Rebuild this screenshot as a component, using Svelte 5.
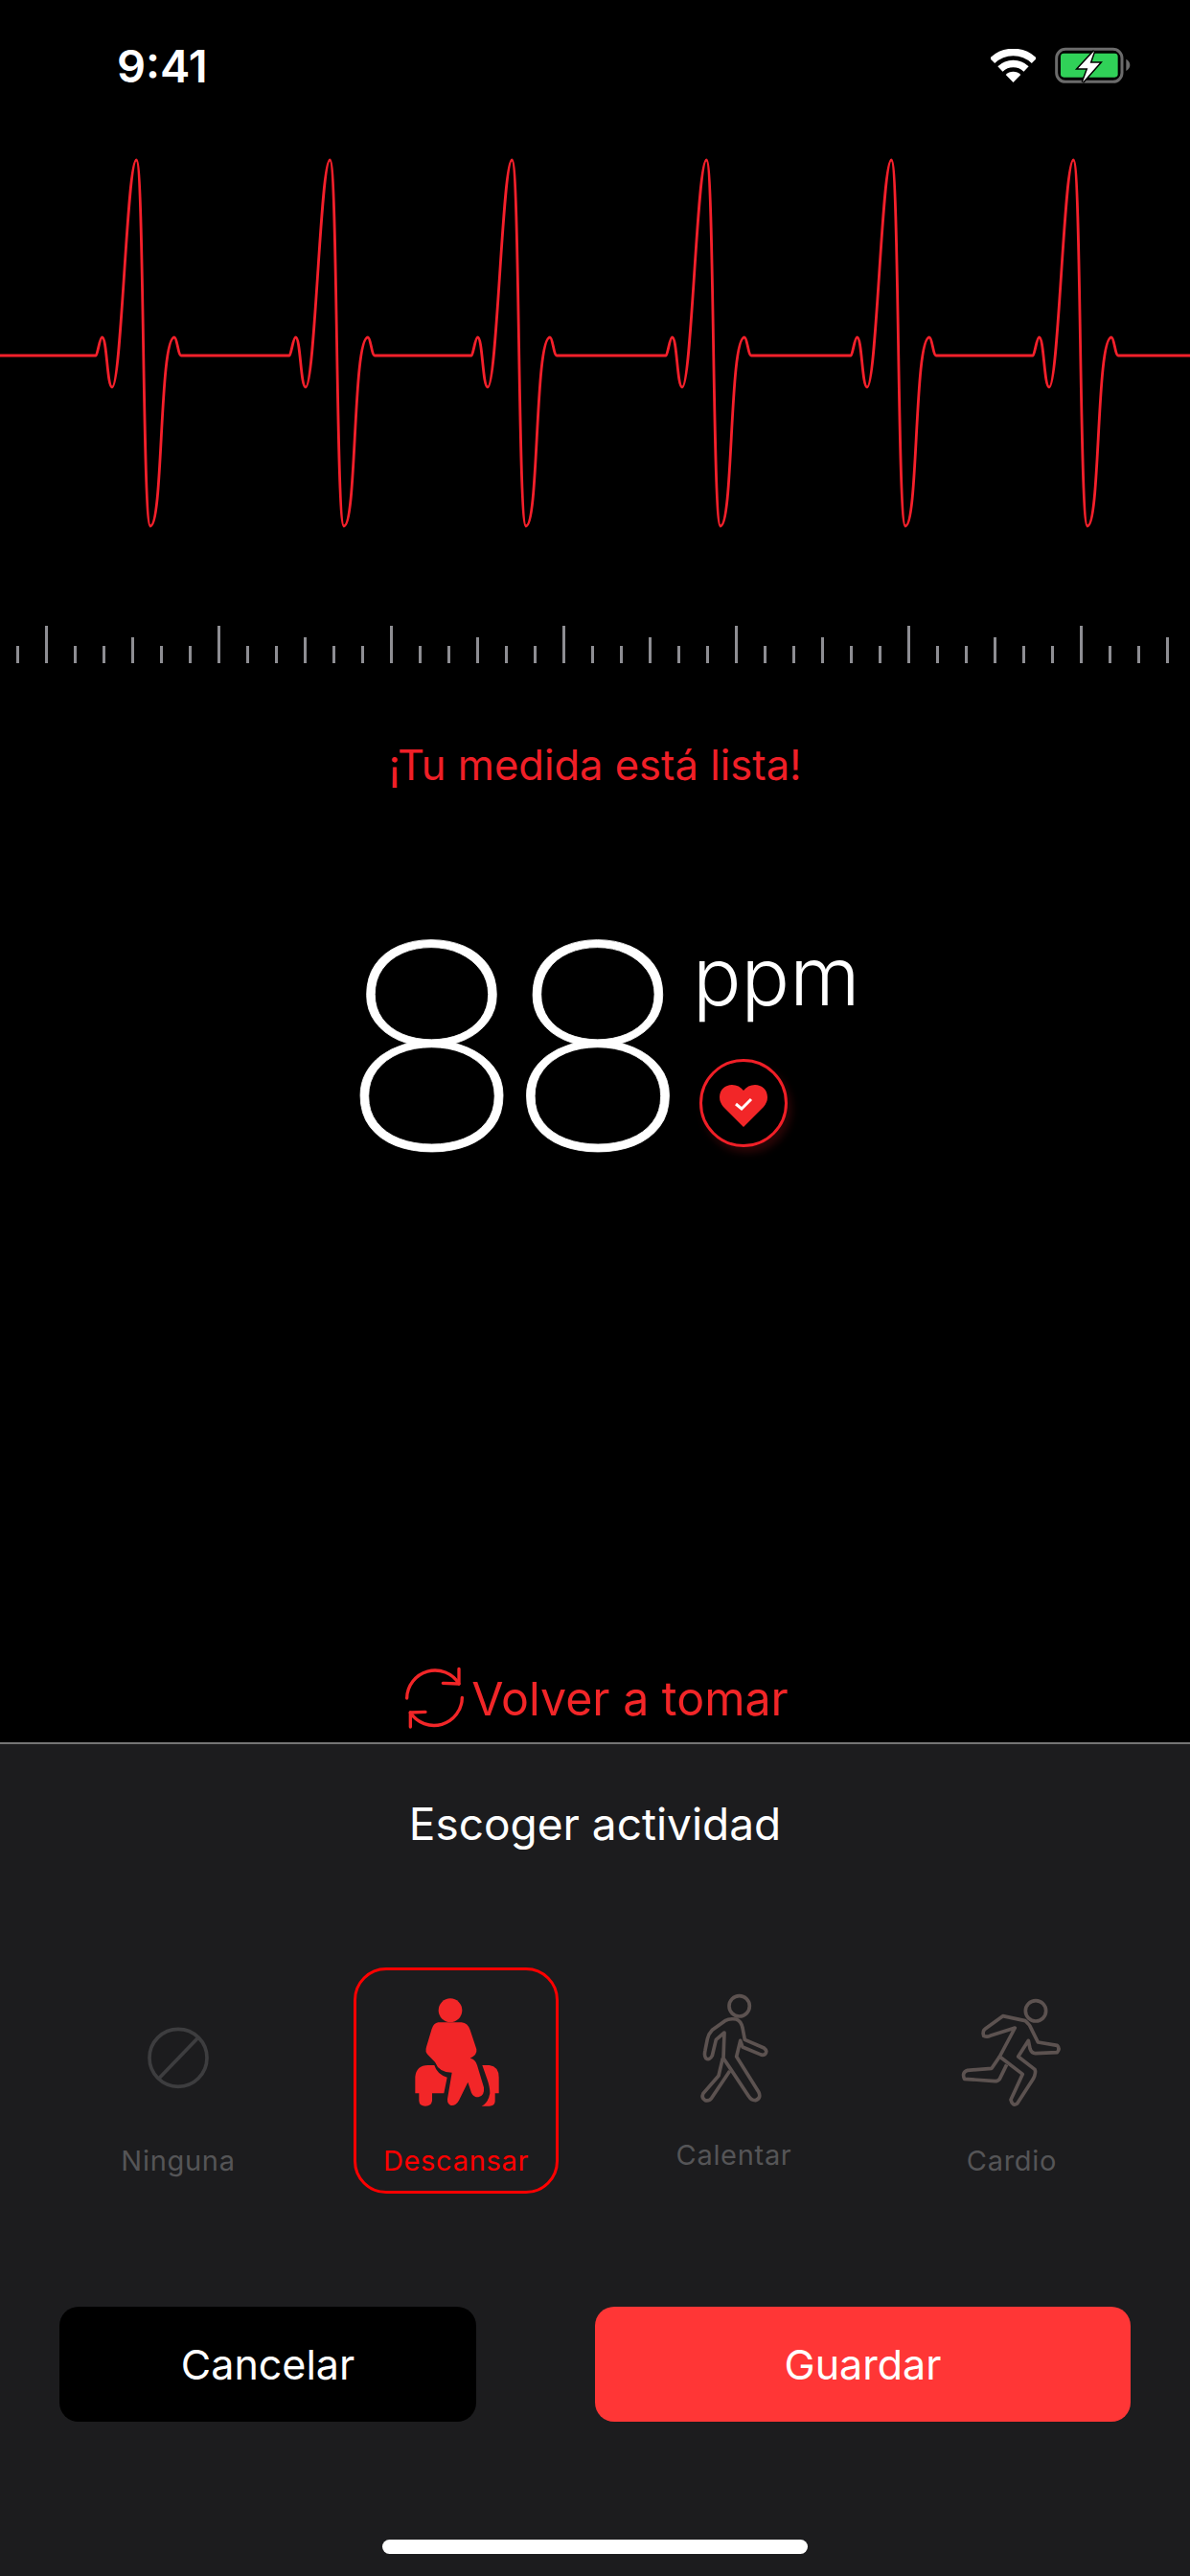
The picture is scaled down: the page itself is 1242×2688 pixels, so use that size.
<script lang="ts">
  const BASELINE = 371;

  // x where each beat leaves the flat line
  const beatStarts = [100, 302, 492, 695, 888, 1078];

  function beatPath(x0: number): string {
    const p = (x: number, y: number) => `${x0 + x},${BASELINE + y}`;
    return [
      `L${p(0, 0)}`,
      `C${p(2, -1)} ${p(4, -19)} ${p(6.5, -19)}`,
      `C${p(11.7, -19)} ${p(11.7, 33)} ${p(17, 33)}`,
      `C${p(26.8, 33)} ${p(32.5, -204)} ${p(42.3, -204)}`,
      `C${p(50.5, -204)} ${p(48.5, 178)} ${p(57, 178)}`,
      `C${p(70.4, 178)} ${p(66.2, -19)} ${p(82, -19)}`,
      `C${p(84.8, -19)} ${p(86, 0)} ${p(89, 0)}`
    ].join(' ');
  }

  const ecgPath = `M0,${BASELINE} ${beatStarts.map(beatPath).join(' ')} L1242,${BASELINE}`;

  const ticks = Array.from({ length: 41 }, (_, i) => {
    const step = (i + 5) % 6;
    return step === 0 ? 'major' : step === 3 ? 'medium' : 'minor';
  });
</script>

<div class="screen">
  <header class="status">
    <span class="time">9:41</span>
    <div class="status-icons">
      <svg class="wifi" viewBox="0 0 47 35" width="47" height="35">
        <path d="M1.6 12.3A31.5 31.5 0 0 1 45.4 12.3" fill="none" stroke="#fff" stroke-width="7.5" />
        <path d="M9.95 21A19.5 19.5 0 0 1 37.05 21" fill="none" stroke="#fff" stroke-width="7.5" />
        <path d="M23.5 35L15.7 27A11 11 0 0 1 31.3 27Z" fill="#fff" />
      </svg>
      <svg class="battery" viewBox="262 55 240 114" width="80" height="38">
        <rect x="270" y="62" width="205" height="102" rx="28" fill="none" stroke="#6b6b6b" stroke-width="9" />
        <rect x="283" y="75" width="179" height="75" rx="10" fill="#30d158" />
        <path d="M488 93Q500 100 500 112Q500 123 488 130Z" fill="#6b6b6b" />
        <path d="M388 68L338 122H368L352 165L405 105H375Z" fill="#fff" stroke="#000" stroke-width="9" paint-order="stroke" />
      </svg>
    </div>
  </header>

  <svg class="ecg" viewBox="0 136 1242 444" width="1242" height="444">
    <path d={ecgPath} fill="none" stroke="#f5202b" stroke-width="2.8" stroke-linejoin="round" />
  </svg>

  <div class="ruler">
    {#each ticks as tick}
      <span class="tick {tick}"></span>
    {/each}
  </div>

  <p class="ready">¡Tu medida está lista!</p>

  <div class="reading">
    <span class="value">88</span>
    <div class="reading-side">
      <span class="unit">ppm</span>
      <div class="badge">
        <svg viewBox="0 0 50 44" width="50" height="44">
          <path d="M25 44L4 23Q0 18 0 13C0 5 6 0 13 0C18 0 22 2 25 6C28 2 32 0 37 0C44 0 50 5 50 13Q50 18 46 23Z" fill="#f22628" />
          <path d="M17 20L23 25L33 15" fill="none" stroke="#fff" stroke-width="3" />
        </svg>
      </div>
    </div>
  </div>

  <div class="retake">
    <svg viewBox="60 55 210 210" width="70" height="70">
      <g fill="none" stroke="#f22628" stroke-width="10" stroke-linecap="round" stroke-linejoin="round">
        <path d="M77 160A88 88 0 0 1 240 115" />
        <path d="M240 68V115L190 113" />
        <path d="M250 158A88 88 0 0 1 88 205" />
        <path d="M88 250V205L135 203" />
      </g>
    </svg>
    <span>Volver a tomar</span>
  </div>

  <section class="sheet">
    <h2 class="sheet-title">Escoger actividad</h2>

    <div class="activities">
      <div class="activity">
        <svg class="icon" viewBox="79 138 360 390" width="120" height="130">
          <circle cx="259" cy="349" r="90" fill="none" stroke="#3d3d3f" stroke-width="11" />
          <path d="M320 287L200 412" fill="none" stroke="#3d3d3f" stroke-width="11" />
        </svg>
        <span class="label">Ninguna</span>
      </div>

      <div class="activity selected">
        <svg class="icon" viewBox="948 138 360 390" width="120" height="130">
          <g fill="#f22628">
            <circle cx="1110" cy="200" r="37" />
            <path d="M1072 238H1145Q1165 240 1172 262L1192 322Q1195 340 1172 350Q1188 352 1194 372L1215 442Q1218 468 1198 472Q1182 472 1176 458L1165 425L1137 482Q1127 500 1112 498Q1100 494 1101 478L1115 395Q1075 395 1062 362L1040 340Q1030 330 1035 315L1052 258Q1058 240 1072 238Z" />
            <path d="M1000 460V408Q1004 372 1040 372H1060Q1068 400 1100 410L1090 460H1053V484Q1050 500 1032 500Q1013 500 1012 484V460Z" />
            <path d="M1210 372H1232Q1262 376 1262 410V460H1250V486Q1248 500 1232 500H1208Q1230 488 1234 460Q1234 440 1225 415Z" />
          </g>
        </svg>
        <span class="label">Descansar</span>
      </div>

      <div class="activity calentar">
        <svg class="icon" viewBox="138 108 360 390" width="120" height="130">
          <g fill="none" stroke="#5c5250" stroke-width="11" stroke-linejoin="round">
            <circle cx="335" cy="157" r="32" />
            <path d="M290 203Q305 195 325 198Q340 203 345 225L352 262L412 288Q425 298 415 308Q408 312 400 308L345 285L338 265L326 315L395 425Q405 445 385 452Q372 452 365 440L285 320L288 240L262 262L250 312Q242 328 230 320Q224 312 228 295L235 260Q238 245 250 232Z" />
            <path d="M283 320L270 375L222 430Q215 445 228 452Q240 455 248 445L305 360" />
          </g>
        </svg>
        <span class="label">Calentar</span>
      </div>

      <div class="activity">
        <svg class="icon" viewBox="1008 108 360 390" width="120" height="130">
          <g fill="none" stroke="#5c5250" stroke-width="11" stroke-linejoin="round">
            <circle cx="1263" cy="172" r="32" />
            <path d="M1160 188L1230 203Q1245 215 1250 230L1270 270L1330 280Q1340 290 1330 302L1262 305Q1250 305 1245 290L1240 265L1208 315L1260 355Q1265 365 1255 385L1205 462Q1190 472 1185 450L1222 370L1150 315L1198 225L1120 250Q1110 255 1100 250Q1095 235 1105 228Z" />
            <path d="M1150 315L1125 352L1050 358Q1030 365 1040 385L1135 392Q1145 392 1150 385L1172 340" />
          </g>
        </svg>
        <span class="label">Cardio</span>
      </div>
    </div>

    <div class="actions">
      <button class="btn cancel">Cancelar</button>
      <button class="btn save">Guardar</button>
    </div>

    <div class="home-indicator"></div>
  </section>
</div>

<style>
  :global(body) {
    background: #000;
  }

  .screen {
    width: 1242px;
    height: 2688px;
    display: flex;
    flex-direction: column;
    background: #000;
    color: #fff;
    font-family: Inter, "Liberation Sans", sans-serif;
    overflow: hidden;
  }

  .status {
    height: 136px;
    flex: none;
    display: flex;
    align-items: center;
    justify-content: space-between;
    box-sizing: border-box;
    padding: 0 62px 0 122px;
  }

  .time {
    font-size: 47px;
    font-weight: 600;
    line-height: 1;
  }

  .status-icons {
    display: flex;
    align-items: center;
    gap: 19px;
  }

  .ecg {
    display: block;
    flex: none;
  }

  .ruler {
    height: 39px;
    margin-top: 73px;
    padding-left: 16.5px;
    display: flex;
    align-items: flex-end;
    gap: 27px;
    flex: none;
  }

  .tick {
    width: 3px;
    background: #8e8e93;
  }

  .tick.major { height: 39px; }
  .tick.medium { height: 27px; }
  .tick.minor { height: 18px; }

  .ready {
    margin: 81px 0 0;
    text-align: center;
    font-size: 43.5px;
    line-height: 50px;
    color: #f01f27;
  }

  .reading {
    margin-top: 106px;
    padding-left: 360px;
    display: flex;
    align-items: flex-start;
  }

  .value {
    font-family: Roboto, sans-serif;
    font-weight: 100;
    font-size: 303px;
    line-height: 320px;
    letter-spacing: -6px;
    -webkit-text-stroke: 0.8px #fff;
    width: 363px;
    flex: none;
    margin-top: 7px;
    transform: scaleX(1.085);
    transform-origin: left center;
  }

  .reading-side {
    display: flex;
    flex-direction: column;
    align-items: flex-start;
    padding-top: 40px;
  }

  .unit {
    font-weight: 300;
    font-size: 84px;
    line-height: 100px;
  }

  .badge {
    width: 92px;
    height: 92px;
    box-sizing: border-box;
    margin: 36px 0 0 7px;
    border: 3px solid #f01f27;
    border-radius: 50%;
    box-shadow: 4px 6px 8px rgba(240, 31, 39, 0.18);
    display: flex;
    align-items: center;
    justify-content: center;
  }

  .badge svg {
    margin-top: 6px;
  }

  .retake {
    margin-top: auto;
    margin-bottom: 11px;
    display: flex;
    align-items: center;
    justify-content: center;
    gap: 3px;
    font-size: 48.3px;
    color: #f22628;
    height: 70px;
  }

  .sheet {
    height: 870px;
    flex: none;
    box-sizing: border-box;
    border-top: 2px solid #757575;
    background: #1c1c1e;
    display: flex;
    flex-direction: column;
  }

  .sheet-title {
    margin: 58px 0 0;
    text-align: center;
    font-size: 46px;
    font-weight: 400;
    line-height: 50px;
  }

  .activities {
    margin-top: 125px;
    padding-left: 41px;
    display: grid;
    grid-template-columns: repeat(4, 290px);
  }

  .activity {
    height: 236px;
    box-sizing: border-box;
    padding-top: 21px;
    border: 3px solid transparent;
    border-radius: 34px;
    justify-self: center;
    width: 214px;
    display: flex;
    flex-direction: column;
    align-items: center;
  }

  .activity.selected {
    border-color: #f00;
  }

  .icon {
    display: block;
    flex: none;
  }

  .label {
    margin-top: 30px;
    font-size: 29px;
    line-height: 36px;
    letter-spacing: 0.7px;
    color: #555557;
  }

  .selected .label {
    color: #f00;
  }

  .calentar .label {
    margin-top: 24px;
  }

  .actions {
    margin-top: 118px;
    padding: 0 62px;
    display: flex;
    justify-content: space-between;
  }

  .btn {
    height: 120px;
    border: none;
    border-radius: 20px;
    color: #fff;
    font-family: inherit;
    font-size: 43px;
    padding: 0;
  }

  .btn.cancel {
    width: 435px;
    background: #000;
  }

  .btn.save {
    width: 559px;
    background: #ff3636;
  }

  .home-indicator {
    width: 444px;
    height: 15px;
    margin: 123px auto 0;
    border-radius: 8px;
    background: #fff;
  }
</style>
